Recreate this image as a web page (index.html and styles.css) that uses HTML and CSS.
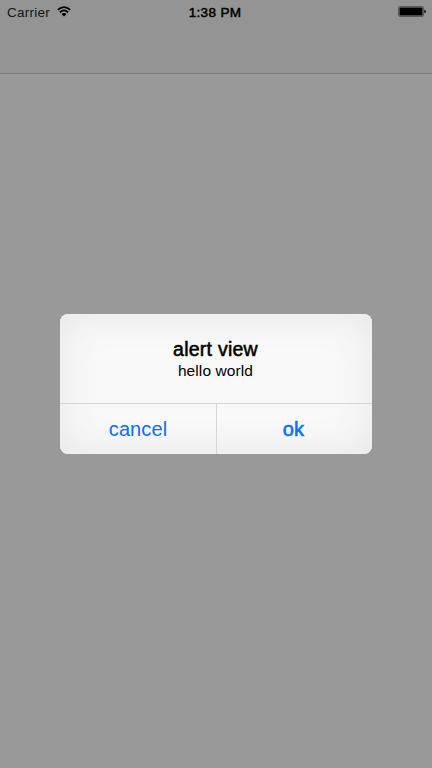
FILE: index.html
```html
<!DOCTYPE html>
<html lang="en">
<head>
<meta charset="utf-8">
<title>Alert view</title>
<link rel="stylesheet" href="styles.css">
</head>
<body>
<header class="navbar">
  <div class="status">
    <div class="carrier"><span class="label carrier-name">Carrier</span>
      <svg class="wifi" width="14" height="11" viewBox="0 0 14 11" fill="none" stroke="#000" stroke-width="1.75"><path d="M.7 3.9Q7-1.6 13.3 3.9M2.8 6.3Q7 2.6 11.2 6.3"/><path d="M4.4 8Q7 6 9.6 8L7 10.6Z" fill="#000" stroke="none"/></svg>
    </div>
    <span class="label time">1:38 PM</span>
    <svg class="battery" width="28" height="11" viewBox="0 0 28 11"><rect x=".5" y=".5" width="25" height="10" rx="1.5" fill="none" stroke="#000" stroke-opacity=".5" stroke-width=".8"/><rect x="1.5" y="1.5" width="23" height="8" rx=".5"/><path d="M26.3 3.7Q27.8 4 27.8 5.5T26.3 7.3Z"/></svg>
  </div>
</header>
<main class="screen">
  <section class="alert" role="alertdialog">
    <div class="message">
      <h1 class="title"><span class="label">alert view</span></h1>
      <p class="text"><span class="label">hello world</span></p>
    </div>
    <div class="actions">
      <button class="action"><span class="label">cancel</span></button>
      <button class="action primary"><span class="label">ok</span></button>
    </div>
  </section>
</main>
</body>
</html>
```
FILE: styles.css
```css
* { box-sizing: border-box; }
body { margin: 0; height: 768px; display: flex; flex-direction: column; overflow: hidden; background: #999; color: #000; font-family: "Liberation Sans", Arial, sans-serif; }
.navbar { height: 74px; flex: none; background: #949494; border-bottom: 1px solid #7e7e7e; }
.status { height: 24px; padding: 0 6px 0 7px; display: grid; grid-template-columns: 1fr auto 1fr; align-items: center; font-size: 13.5px; }
.carrier { display: flex; align-items: center; gap: 7px; }
.carrier-name { letter-spacing: .25px; color: #151515; }
.wifi { margin-top: -1px; }
.time { letter-spacing: .35px; margin-right: 3px; -webkit-text-stroke: .5px #000; }
.battery { justify-self: end; margin-top: -1px; }
.screen { flex: 1; display: flex; flex-direction: column; align-items: center; padding: 240px 0 0; }
.alert { width: 312px; height: 140px; border-radius: 8px; overflow: hidden; background: #f9f9f9; box-shadow: inset 0 0 40px #e6e6e6; }
.message { height: 89px; padding-top: 24px; text-align: center; }
.title { margin: 0 0 0 -1px; font-size: 19.5px; line-height: 22px; font-weight: normal; letter-spacing: .25px; -webkit-text-stroke: .55px #000; }
.text { margin: 0 0 0 -1px; font-size: 15.5px; line-height: 22px; letter-spacing: .1px; }
.actions { height: 51px; display: grid; grid-template-columns: 1fr 1fr; border-top: 1px solid #d6d6d6; }
.action { border: 0; padding: 1px 0 0; background: transparent; font: 20px "Liberation Sans", Arial, sans-serif; letter-spacing: .1px; color: #0b70ff; }
.primary { border-left: 1px solid #d6d6d6; padding-right: 2px; -webkit-text-stroke: .6px #0b70ff; }
```
